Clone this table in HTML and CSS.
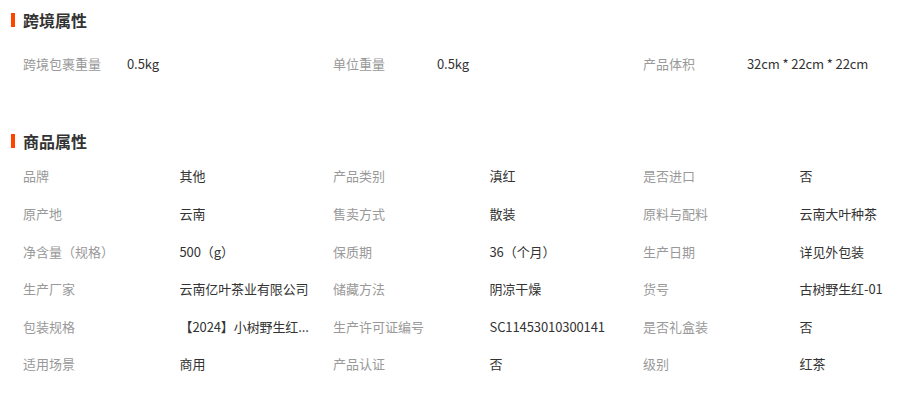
FILE: index.html
```html
<!DOCTYPE html>
<html lang="zh-CN">
<head>
<meta charset="utf-8">
<title>商品属性</title>
<link rel="stylesheet" href="styles.css">
</head>
<body>
<div class="page">
  <section class="section section--cross">
    <h2 class="section-title"><span class="bar"></span>跨境属性</h2>
    <div class="attrs attrs--narrow">
      <div class="attr"><span class="label">跨境包裹重量</span><span class="value">0.5kg</span></div>
      <div class="attr"><span class="label">单位重量</span><span class="value">0.5kg</span></div>
      <div class="attr"><span class="label">产品体积</span><span class="value">32cm * 22cm * 22cm</span></div>
    </div>
  </section>
  <section class="section section--goods">
    <h2 class="section-title"><span class="bar"></span>商品属性</h2>
    <div class="attrs attrs--wide">
      <div class="attr"><span class="label">品牌</span><span class="value">其他</span></div>
      <div class="attr"><span class="label">产品类别</span><span class="value">滇红</span></div>
      <div class="attr"><span class="label">是否进口</span><span class="value">否</span></div>
      <div class="attr"><span class="label">原产地</span><span class="value">云南</span></div>
      <div class="attr"><span class="label">售卖方式</span><span class="value">散装</span></div>
      <div class="attr"><span class="label">原料与配料</span><span class="value">云南大叶种茶</span></div>
      <div class="attr"><span class="label">净含量（规格）</span><span class="value">500（g）</span></div>
      <div class="attr"><span class="label">保质期</span><span class="value">36（个月）</span></div>
      <div class="attr"><span class="label">生产日期</span><span class="value">详见外包装</span></div>
      <div class="attr"><span class="label">生产厂家</span><span class="value">云南亿叶茶业有限公司</span></div>
      <div class="attr"><span class="label">储藏方法</span><span class="value">阴凉干燥</span></div>
      <div class="attr"><span class="label">货号</span><span class="value">古树野生红-01</span></div>
      <div class="attr"><span class="label">包装规格</span><span class="value">【2024】小树野生红...</span></div>
      <div class="attr"><span class="label">生产许可证编号</span><span class="value">SC11453010300141</span></div>
      <div class="attr"><span class="label">是否礼盒装</span><span class="value">否</span></div>
      <div class="attr"><span class="label">适用场景</span><span class="value">商用</span></div>
      <div class="attr"><span class="label">产品认证</span><span class="value">否</span></div>
      <div class="attr"><span class="label">级别</span><span class="value">红茶</span></div>
    </div>
  </section>
</div>
</body>
</html>
```

FILE: styles.css
```css
html, body {
  margin: 0;
  padding: 0;
  background: #fff;
}

body {
  font-family: "Noto Sans CJK SC", "Noto Sans", sans-serif;
  font-size: 13px;
  color: #333;
}

.page {
  padding-top: 8px;
  width: 913px;
}

.section-title {
  display: flex;
  align-items: center;
  gap: 8px;
  height: 24px;
  margin: 0;
  padding-left: 11px;
  font-size: 16px;
  font-weight: bold;
  color: #333;
  line-height: 24px;
}

.bar {
  width: 4px;
  height: 14px;
  background: #ff4400;
}

.attrs {
  display: grid;
  grid-template-columns: repeat(3, 310px);
  grid-auto-rows: 37.6px;
  align-items: center;
  padding-left: 23px;
}

.section--cross .attrs {
  margin-top: 13px;
  margin-bottom: 46px;
}

.section--goods .attrs {
  margin-top: 5px;
}

.attr {
  display: flex;
  align-items: center;
  line-height: 20px;
  white-space: nowrap;
}

.label {
  color: #999;
  flex: none;
}

.value {
  color: #333;
  letter-spacing: -0.1px;
}

.attrs--narrow .label {
  width: 104px;
}

.attrs--wide .label {
  width: 156.5px;
}
```
